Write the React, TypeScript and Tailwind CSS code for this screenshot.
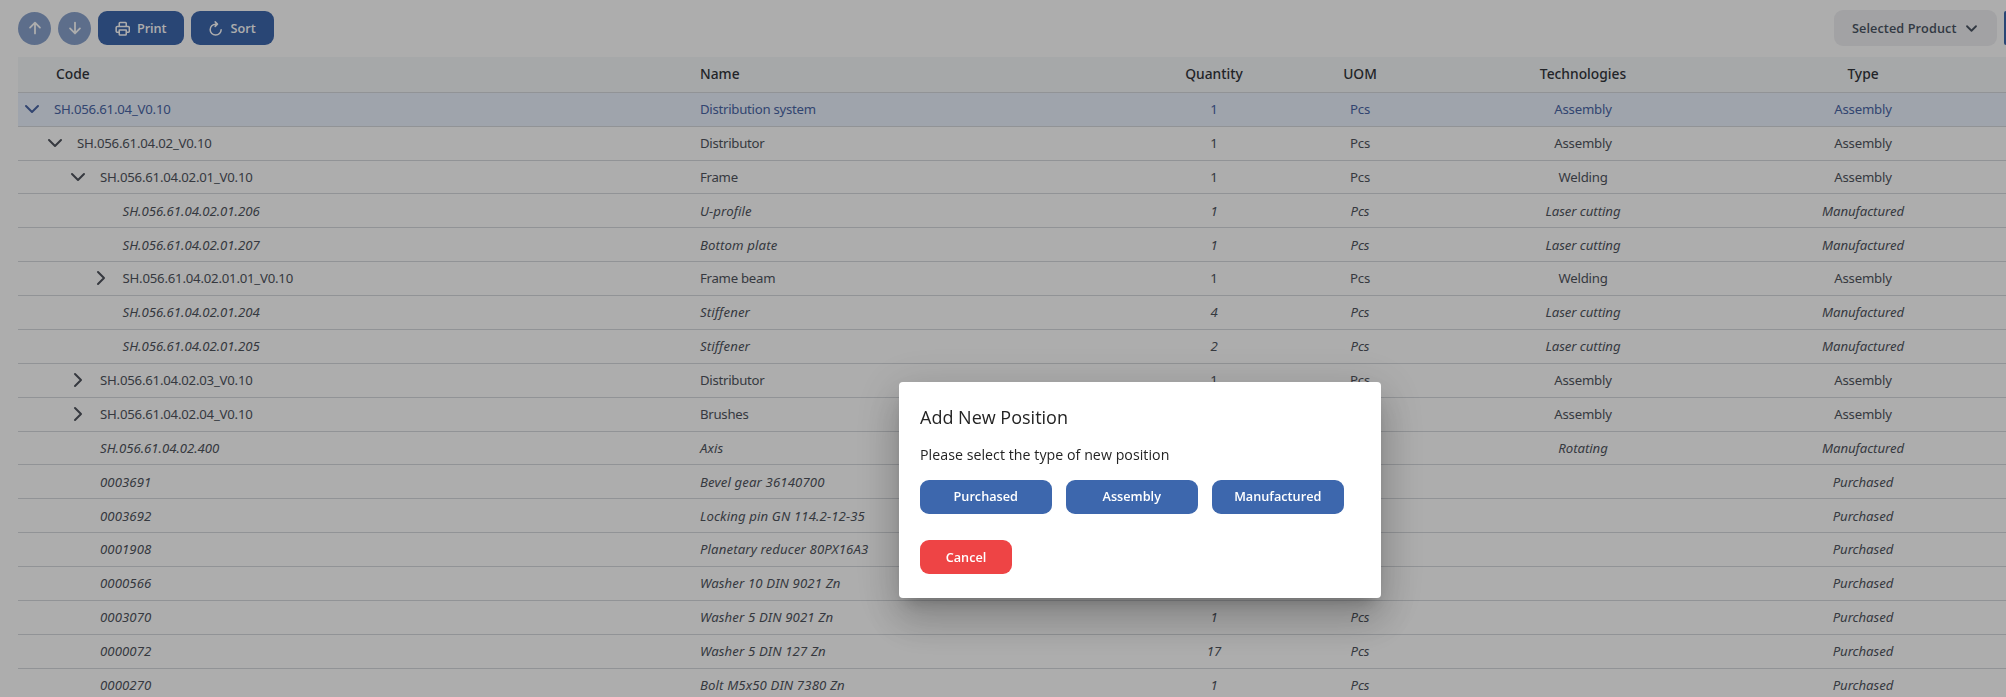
import React from 'react';
import clsx from 'clsx';

type Row = {
  level: number;
  code: string;
  name: string;
  qty?: string;
  uom?: string;
  tech?: string;
  type: string;
  state?: 'open' | 'closed';
};

const rows: Row[] = [
  { level: 0, code: 'SH.056.61.04_V0.10', name: 'Distribution system', qty: '1', uom: 'Pcs', tech: 'Assembly', type: 'Assembly', state: 'open' },
  { level: 1, code: 'SH.056.61.04.02_V0.10', name: 'Distributor', qty: '1', uom: 'Pcs', tech: 'Assembly', type: 'Assembly', state: 'open' },
  { level: 2, code: 'SH.056.61.04.02.01_V0.10', name: 'Frame', qty: '1', uom: 'Pcs', tech: 'Welding', type: 'Assembly', state: 'open' },
  { level: 3, code: 'SH.056.61.04.02.01.206', name: 'U-profile', qty: '1', uom: 'Pcs', tech: 'Laser cutting', type: 'Manufactured' },
  { level: 3, code: 'SH.056.61.04.02.01.207', name: 'Bottom plate', qty: '1', uom: 'Pcs', tech: 'Laser cutting', type: 'Manufactured' },
  { level: 3, code: 'SH.056.61.04.02.01.01_V0.10', name: 'Frame beam', qty: '1', uom: 'Pcs', tech: 'Welding', type: 'Assembly', state: 'closed' },
  { level: 3, code: 'SH.056.61.04.02.01.204', name: 'Stiffener', qty: '4', uom: 'Pcs', tech: 'Laser cutting', type: 'Manufactured' },
  { level: 3, code: 'SH.056.61.04.02.01.205', name: 'Stiffener', qty: '2', uom: 'Pcs', tech: 'Laser cutting', type: 'Manufactured' },
  { level: 2, code: 'SH.056.61.04.02.03_V0.10', name: 'Distributor', qty: '1', uom: 'Pcs', tech: 'Assembly', type: 'Assembly', state: 'closed' },
  { level: 2, code: 'SH.056.61.04.02.04_V0.10', name: 'Brushes', qty: '1', uom: 'Pcs', tech: 'Assembly', type: 'Assembly', state: 'closed' },
  { level: 2, code: 'SH.056.61.04.02.400', name: 'Axis', qty: '1', uom: 'Pcs', tech: 'Rotating', type: 'Manufactured' },
  { level: 2, code: '0003691', name: 'Bevel gear 36140700', qty: '1', uom: 'Pcs', type: 'Purchased' },
  { level: 2, code: '0003692', name: 'Locking pin GN 114.2-12-35', qty: '1', uom: 'Pcs', type: 'Purchased' },
  { level: 2, code: '0001908', name: 'Planetary reducer 80PX16A3', qty: '1', uom: 'Pcs', type: 'Purchased' },
  { level: 2, code: '0000566', name: 'Washer 10 DIN 9021 Zn', qty: '1', uom: 'Pcs', type: 'Purchased' },
  { level: 2, code: '0003070', name: 'Washer 5 DIN 9021 Zn', qty: '1', uom: 'Pcs', type: 'Purchased' },
  { level: 2, code: '0000072', name: 'Washer 5 DIN 127 Zn', qty: '17', uom: 'Pcs', type: 'Purchased' },
  { level: 2, code: '0000270', name: 'Bolt M5x50 DIN 7380 Zn', qty: '1', uom: 'Pcs', type: 'Purchased' },
];

const indent = ['pl-1', 'pl-[27px]', 'pl-[50px]', 'pl-[72.5px]'];
const columns = 'grid grid-cols-[682px_444px_140px_152px_294px_266px_40px] items-center';

function Icon({ d, className, width = 2 }: { d: string; className: string; width?: number }) {
  return (
    <svg viewBox="0 0 20 20" fill="none" stroke="currentColor" strokeWidth={width} strokeLinecap="round" strokeLinejoin="round" className={className}>
      <path d={d} />
    </svg>
  );
}

const ARROW_UP = 'M10 16V4M4.500 9.500L10 4l5.500 5.500';
const ARROW_DOWN = 'M10 4v12M4.500 10.500L10 16l5.500-5.500';
const CHEVRON_DOWN = 'M4 7l6 6 6-6';
const CHEVRON_RIGHT = 'M7 4l6 6-6 6';
const PRINT =
  'M5.500 7V3a1 1 0 0 1 1-1h7a1 1 0 0 1 1 1v4M5.500 14.500H3.200a1.700 1.700 0 0 1-1.700-1.700V8.700A1.700 1.700 0 0 1 3.200 7h13.600a1.700 1.700 0 0 1 1.700 1.700v4.100a1.700 1.700 0 0 1-1.700 1.700h-2.300M5.500 11.500h9V17a1 1 0 0 1-1 1h-7a1 1 0 0 1-1-1z';
const REFRESH = 'M17.500 11.500a7.300 7.300 0 1 1-7.300-7.300h2.300M9.600 1.200l3 3-3 3';

const primary = 'flex h-[34px] items-center rounded-[9px] bg-[#3d67ad] font-semibold text-white';

function Toolbar() {
  return (
    <div className="flex h-14 items-center pl-[18px]">
      <button className="flex size-[33px] items-center justify-center rounded-full bg-[#3d67ad] text-white opacity-60">
        <Icon d={ARROW_UP} className="size-[18px]" />
      </button>
      <button className="ml-[7px] flex size-[33px] items-center justify-center rounded-full bg-[#3d67ad] text-white opacity-60">
        <Icon d={ARROW_DOWN} className="size-[18px]" />
      </button>
      <button className={clsx(primary, 'ml-[6.500px] w-[86px] pt-px pl-[17px] tracking-[-0.1px]')}>
        <Icon d={PRINT} className="mr-[7px] size-[15.500px]" />
        Print
      </button>
      <button className={clsx(primary, 'ml-[7px] w-[83px] pt-px pl-[17px]')}>
        <Icon d={REFRESH} className="mr-2 size-[15px]" />
        Sort
      </button>
      <button className="ml-auto flex h-9 w-[163px] items-center rounded-[9px] bg-[#efeff2] pt-px pl-[18px] font-semibold text-[#4b5563]">
        <span className="tracking-[0.08px]">Selected Product</span>
        <Icon d={CHEVRON_DOWN} width={2.400} className="ml-[7px] size-[15px]" />
      </button>
      <span className="ml-[7px] h-[34px] w-[2px] rounded-l-[9px] bg-[#3d67ad]" />
    </div>
  );
}

function TableRow({ row, selected }: { row: Row; selected: boolean }) {
  const leaf = !row.state;
  const digits = row.code.length === 7;
  return (
    <div
      className={clsx(
        columns,
        'h-[33.875px] border-b border-[#d6d9dd] pt-[1.500px] font-["Noto_Sans",sans-serif] text-[13.2px]',
        leaf ? 'tracking-[-0.06px] italic' : 'tracking-[-0.21px]',
        selected ? 'bg-[#ebf2fe] text-[#4a66a6]' : 'text-[#50555e]',
      )}
    >
      <div className={clsx('flex items-center', indent[row.level])}>
        <span className="mr-3 flex size-5 items-center justify-center">
          {row.state && <Icon d={row.state === 'open' ? CHEVRON_DOWN : CHEVRON_RIGHT} className="size-5 -translate-y-px" />}
        </span>
        <span className={clsx(leaf && (digits ? 'tracking-[0.06px]' : 'tracking-[-0.02px]'))}>{row.code}</span>
      </div>
      <div className={clsx(leaf ? 'tracking-[0.12px]' : 'tracking-[-0.27px]')}>{row.name}</div>
      <div className="text-center">{row.qty}</div>
      <div className="text-center">{row.uom}</div>
      <div className="text-center">{row.tech}</div>
      <div className="text-center">{row.type}</div>
    </div>
  );
}

function Dialog() {
  return (
    <div className="fixed inset-0 bg-black/32 pt-[382px] pl-[899px]">
      <div className="flex h-[216px] w-[482px] flex-col rounded bg-white px-[21px] pt-[21px] text-[#242424] shadow-[0_11px_15px_-7px_rgba(0,0,0,0.2),0_24px_38px_3px_rgba(0,0,0,0.14),0_9px_46px_8px_rgba(0,0,0,0.12)]">
        <h2 className="text-[18px] leading-7">Add New Position</h2>
        <p className="mt-3 text-[14.2px] leading-6 tracking-[0.04px]">Please select the type of new position</p>
        <div className="mt-[12.500px] flex gap-[14.500px]">
          {['Purchased', 'Assembly', 'Manufactured'].map((label) => (
            <button key={label} className={clsx(primary, 'w-[131.500px] justify-center')}>
              {label}
            </button>
          ))}
        </div>
        <button className="mt-[26.500px] h-[34px] w-[92px] rounded-[9px] bg-[#ee4445] pt-px font-semibold text-white">Cancel</button>
      </div>
    </div>
  );
}

export default function App() {
  return (
    <div className="h-[697px] w-full overflow-hidden bg-white font-['Open_Sans',sans-serif] text-[12.7px]">
      <Toolbar />
      <div className="ml-[18px] pt-px">
        <div className={clsx(columns, 'h-[35.750px] border-b border-[#d6d9dd] bg-[#f5f8fa] font-["Noto_Sans",sans-serif] text-[13.800px] font-medium text-[#33363b]')}>
          <div className="pl-[38px]">Code</div>
          <div>Name</div>
          <div className="text-center">Quantity</div>
          <div className="text-center">UOM</div>
          <div className="text-center">Technologies</div>
          <div className="text-center">Type</div>
        </div>
        {rows.map((row, i) => (
          <TableRow key={row.code} row={row} selected={i === 0} />
        ))}
      </div>
      <Dialog />
    </div>
  );
}
